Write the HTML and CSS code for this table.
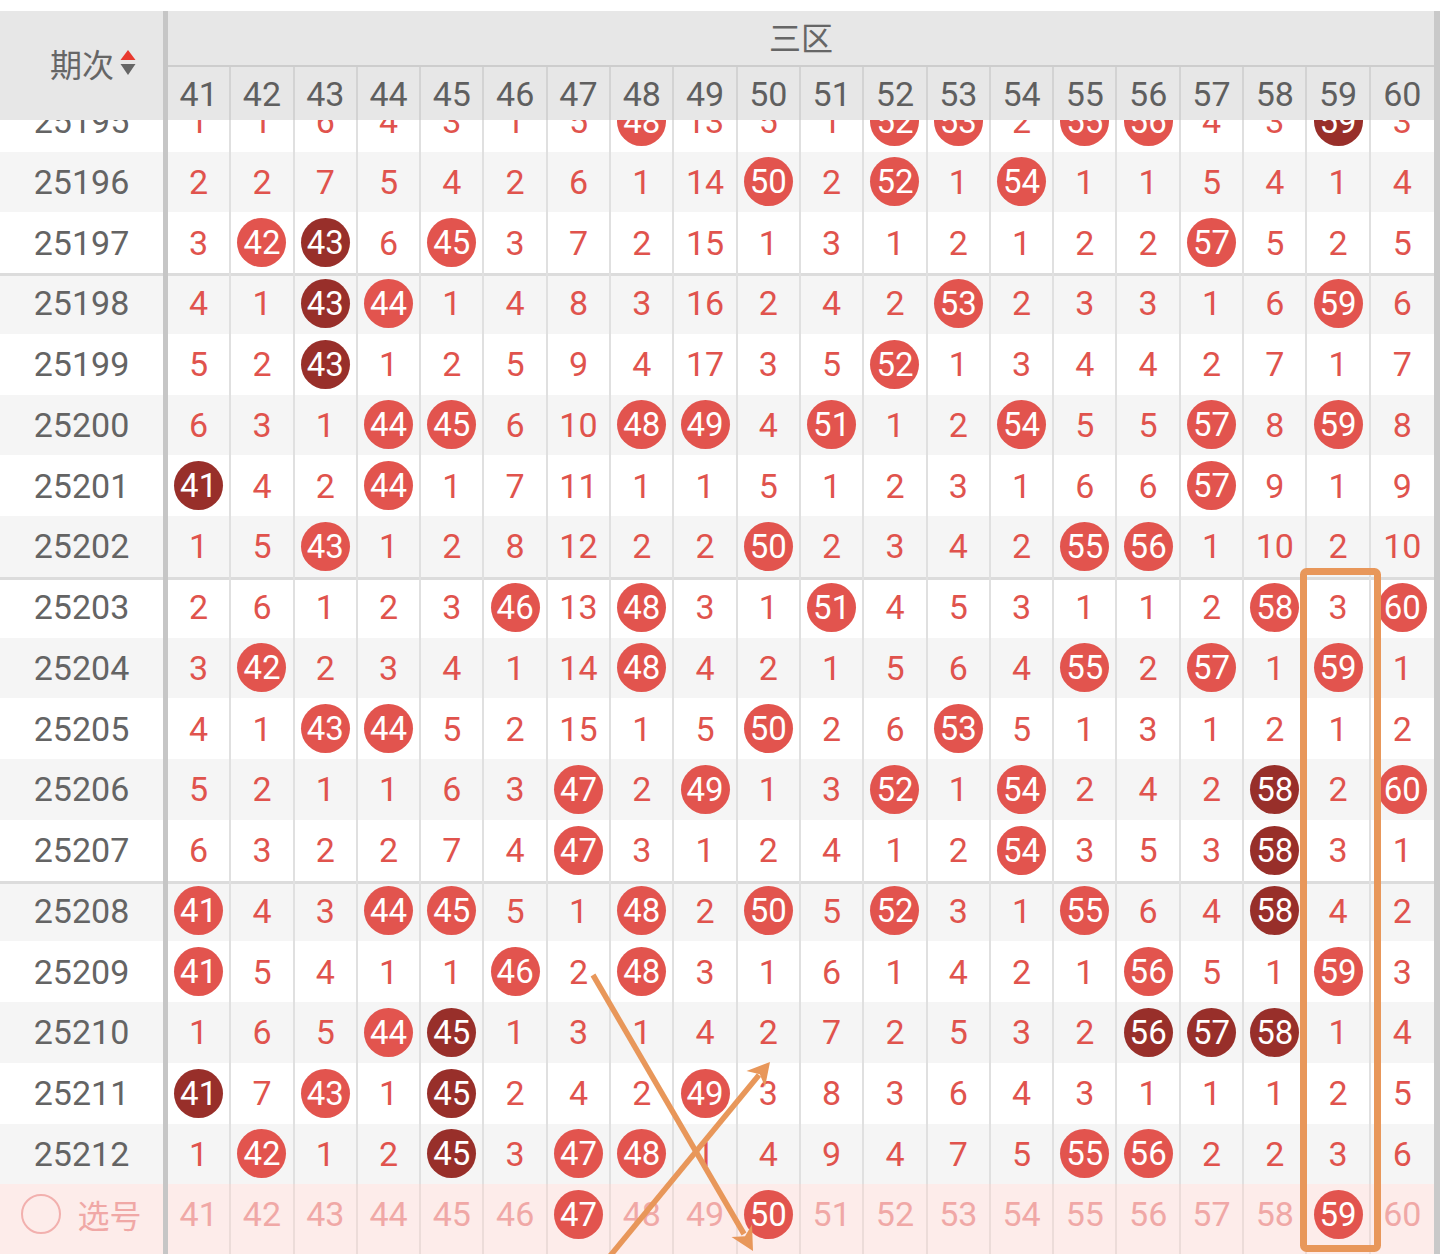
FILE: index.html
```html
<!DOCTYPE html>
<html lang="zh">
<head>
<meta charset="utf-8">
<title>三区走势</title>
<link rel="stylesheet" href="styles.css">
</head>
<body>
<div class="page">
  <div class="sheet">
    <div class="head">
      <div class="head-left">
        <span class="head-title">期次</span>
        <svg class="sort" width="16" height="29" viewBox="0 0 16 29">
          <polygon points="0.5,11 8,1 15.5,11" fill="#e8392f"/>
          <polygon points="0.5,15 15.5,15 8,26" fill="#666666"/>
        </svg>
      </div>
      <div class="head-right">
        <div class="zone">三区</div>
        <div class="nums">
          <span>41</span><span>42</span><span>43</span><span>44</span><span>45</span><span>46</span><span>47</span><span>48</span><span>49</span><span>50</span><span>51</span><span>52</span><span>53</span><span>54</span><span>55</span><span>56</span><span>57</span><span>58</span><span>59</span><span>60</span>
        </div>
      </div>
    </div>
    <div class="body">
      <div class="row cut"><span class="no">25195</span><span>1</span><span>1</span><span>6</span><span>4</span><span>3</span><span>1</span><span>5</span><span><b>48</b></span><span>13</span><span>5</span><span>1</span><span><b>52</b></span><span><b>53</b></span><span>2</span><span><b>55</b></span><span><b>56</b></span><span>4</span><span>3</span><span><b class="dk">59</b></span><span>3</span></div>
      <div class="row alt"><span class="no">25196</span><span>2</span><span>2</span><span>7</span><span>5</span><span>4</span><span>2</span><span>6</span><span>1</span><span>14</span><span><b>50</b></span><span>2</span><span><b>52</b></span><span>1</span><span><b>54</b></span><span>1</span><span>1</span><span>5</span><span>4</span><span>1</span><span>4</span></div>
      <div class="row"><span class="no">25197</span><span>3</span><span><b>42</b></span><span><b class="dk">43</b></span><span>6</span><span><b>45</b></span><span>3</span><span>7</span><span>2</span><span>15</span><span>1</span><span>3</span><span>1</span><span>2</span><span>1</span><span>2</span><span>2</span><span><b>57</b></span><span>5</span><span>2</span><span>5</span></div>
      <div class="row alt grp"><span class="no">25198</span><span>4</span><span>1</span><span><b class="dk">43</b></span><span><b>44</b></span><span>1</span><span>4</span><span>8</span><span>3</span><span>16</span><span>2</span><span>4</span><span>2</span><span><b>53</b></span><span>2</span><span>3</span><span>3</span><span>1</span><span>6</span><span><b>59</b></span><span>6</span></div>
      <div class="row"><span class="no">25199</span><span>5</span><span>2</span><span><b class="dk">43</b></span><span>1</span><span>2</span><span>5</span><span>9</span><span>4</span><span>17</span><span>3</span><span>5</span><span><b>52</b></span><span>1</span><span>3</span><span>4</span><span>4</span><span>2</span><span>7</span><span>1</span><span>7</span></div>
      <div class="row alt"><span class="no">25200</span><span>6</span><span>3</span><span>1</span><span><b>44</b></span><span><b>45</b></span><span>6</span><span>10</span><span><b>48</b></span><span><b>49</b></span><span>4</span><span><b>51</b></span><span>1</span><span>2</span><span><b>54</b></span><span>5</span><span>5</span><span><b>57</b></span><span>8</span><span><b>59</b></span><span>8</span></div>
      <div class="row"><span class="no">25201</span><span><b class="dk">41</b></span><span>4</span><span>2</span><span><b>44</b></span><span>1</span><span>7</span><span>11</span><span>1</span><span>1</span><span>5</span><span>1</span><span>2</span><span>3</span><span>1</span><span>6</span><span>6</span><span><b>57</b></span><span>9</span><span>1</span><span>9</span></div>
      <div class="row alt"><span class="no">25202</span><span>1</span><span>5</span><span><b>43</b></span><span>1</span><span>2</span><span>8</span><span>12</span><span>2</span><span>2</span><span><b>50</b></span><span>2</span><span>3</span><span>4</span><span>2</span><span><b>55</b></span><span><b>56</b></span><span>1</span><span>10</span><span>2</span><span>10</span></div>
      <div class="row grp"><span class="no">25203</span><span>2</span><span>6</span><span>1</span><span>2</span><span>3</span><span><b>46</b></span><span>13</span><span><b>48</b></span><span>3</span><span>1</span><span><b>51</b></span><span>4</span><span>5</span><span>3</span><span>1</span><span>1</span><span>2</span><span><b>58</b></span><span>3</span><span><b>60</b></span></div>
      <div class="row alt"><span class="no">25204</span><span>3</span><span><b>42</b></span><span>2</span><span>3</span><span>4</span><span>1</span><span>14</span><span><b>48</b></span><span>4</span><span>2</span><span>1</span><span>5</span><span>6</span><span>4</span><span><b>55</b></span><span>2</span><span><b>57</b></span><span>1</span><span><b>59</b></span><span>1</span></div>
      <div class="row"><span class="no">25205</span><span>4</span><span>1</span><span><b>43</b></span><span><b>44</b></span><span>5</span><span>2</span><span>15</span><span>1</span><span>5</span><span><b>50</b></span><span>2</span><span>6</span><span><b>53</b></span><span>5</span><span>1</span><span>3</span><span>1</span><span>2</span><span>1</span><span>2</span></div>
      <div class="row alt"><span class="no">25206</span><span>5</span><span>2</span><span>1</span><span>1</span><span>6</span><span>3</span><span><b>47</b></span><span>2</span><span><b>49</b></span><span>1</span><span>3</span><span><b>52</b></span><span>1</span><span><b>54</b></span><span>2</span><span>4</span><span>2</span><span><b class="dk">58</b></span><span>2</span><span><b>60</b></span></div>
      <div class="row"><span class="no">25207</span><span>6</span><span>3</span><span>2</span><span>2</span><span>7</span><span>4</span><span><b>47</b></span><span>3</span><span>1</span><span>2</span><span>4</span><span>1</span><span>2</span><span><b>54</b></span><span>3</span><span>5</span><span>3</span><span><b class="dk">58</b></span><span>3</span><span>1</span></div>
      <div class="row alt grp"><span class="no">25208</span><span><b>41</b></span><span>4</span><span>3</span><span><b>44</b></span><span><b>45</b></span><span>5</span><span>1</span><span><b>48</b></span><span>2</span><span><b>50</b></span><span>5</span><span><b>52</b></span><span>3</span><span>1</span><span><b>55</b></span><span>6</span><span>4</span><span><b class="dk">58</b></span><span>4</span><span>2</span></div>
      <div class="row"><span class="no">25209</span><span><b>41</b></span><span>5</span><span>4</span><span>1</span><span>1</span><span><b>46</b></span><span>2</span><span><b>48</b></span><span>3</span><span>1</span><span>6</span><span>1</span><span>4</span><span>2</span><span>1</span><span><b>56</b></span><span>5</span><span>1</span><span><b>59</b></span><span>3</span></div>
      <div class="row alt"><span class="no">25210</span><span>1</span><span>6</span><span>5</span><span><b>44</b></span><span><b class="dk">45</b></span><span>1</span><span>3</span><span>1</span><span>4</span><span>2</span><span>7</span><span>2</span><span>5</span><span>3</span><span>2</span><span><b class="dk">56</b></span><span><b class="dk">57</b></span><span><b class="dk">58</b></span><span>1</span><span>4</span></div>
      <div class="row"><span class="no">25211</span><span><b class="dk">41</b></span><span>7</span><span><b>43</b></span><span>1</span><span><b class="dk">45</b></span><span>2</span><span>4</span><span>2</span><span><b>49</b></span><span>3</span><span>8</span><span>3</span><span>6</span><span>4</span><span>3</span><span>1</span><span>1</span><span>1</span><span>2</span><span>5</span></div>
      <div class="row alt"><span class="no">25212</span><span>1</span><span><b>42</b></span><span>1</span><span>2</span><span><b class="dk">45</b></span><span>3</span><span><b>47</b></span><span><b>48</b></span><span>1</span><span>4</span><span>9</span><span>4</span><span>7</span><span>5</span><span><b>55</b></span><span><b>56</b></span><span>2</span><span>2</span><span>3</span><span>6</span></div>
      <div class="row pick"><span class="no"><i class="radio"></i><em>选号</em></span><span>41</span><span>42</span><span>43</span><span>44</span><span>45</span><span>46</span><span><b>47</b></span><span>48</span><span>49</span><span><b>50</b></span><span>51</span><span>52</span><span>53</span><span>54</span><span>55</span><span>56</span><span>57</span><span>58</span><span><b>59</b></span><span>60</span></div>
    </div>
  </div>
  <svg class="marks" width="1440" height="1254" viewBox="0 0 1440 1254">
    <rect x="1303.5" y="571.5" width="74" height="677" rx="3" fill="none" stroke="#e8975a" stroke-width="7"/>
    <line x1="593" y1="975" x2="744" y2="1234" stroke="#e8975a" stroke-width="5.5"/>
    <polygon points="753,1251 731.5,1237 745,1236.2 752,1224.5" fill="#e8975a"/>
    <line x1="610" y1="1256" x2="759" y2="1075" stroke="#e8975a" stroke-width="5.5"/>
    <polygon points="770,1062 765,1087 759.8,1074.3 746.5,1071" fill="#e8975a"/>
  </svg>
</div>
</body>
</html>
```
FILE: styles.css
```css
* {
  box-sizing: border-box;
  margin: 0;
  padding: 0;
}

html,
body {
  width: 1440px;
  height: 1254px;
  overflow: hidden;
  background: #ffffff;
}

body {
  font-family: Roboto, "Noto Sans CJK SC", sans-serif;
}

.page {
  position: relative;
  width: 1440px;
  height: 1254px;
  padding-top: 11px;
}

.sheet {
  height: 1243px;
  border-right: 6px solid #c9c9c9;
  overflow: hidden;
  display: flex;
  flex-direction: column;
}

/* ---------- header ---------- */
.head {
  flex: none;
  height: 109px;
  display: grid;
  grid-template-columns: 168px 1fr;
  background: #e7e7e7;
}

.head-left {
  border-right: 5px solid #c6c6c6;
  display: flex;
  align-items: center;
  padding-left: 50px;
  padding-bottom: 6px;
  gap: 6px;
  color: #666666;
}

.head-title {
  font-family: "Noto Sans CJK SC", sans-serif;
  font-size: 32px;
  line-height: 1;
}

.sort {
  display: block;
  margin-top: 2px;
}

.head-right {
  display: flex;
  flex-direction: column;
}

.zone {
  height: 56px;
  border-bottom: 2px solid #cdcdcd;
  padding-bottom: 4px;
  display: flex;
  align-items: center;
  justify-content: center;
  font-family: "Noto Sans CJK SC", sans-serif;
  font-size: 32px;
  line-height: 1;
  color: #666666;
}

.nums {
  flex: 1;
  display: grid;
  grid-template-columns: repeat(20, 1fr);
}

.nums span {
  display: flex;
  align-items: center;
  justify-content: center;
  border-right: 2px solid #d3d3d3;
  font-size: 34px;
  color: #5f5f5f;
}

.nums span:last-child {
  border-right: 0;
}

/* ---------- body ---------- */
.body {
  flex: 1;
  display: flex;
  flex-direction: column;
}

.row {
  flex: none;
  height: 60.75px;
  display: grid;
  grid-template-columns: 168px repeat(20, 1fr);
  grid-template-rows: 100%;
  background: #ffffff;
}

.row.alt {
  background: #f5f5f5;
}

.row.grp {
  box-shadow: inset 0 3px 0 #dcdcdc;
}

.row > span {
  display: flex;
  align-items: center;
  justify-content: center;
  border-right: 2px solid #e0e0e0;
  font-size: 34px;
  color: #e0534d;
}

.row > span:last-child {
  border-right: 0;
}

.row > .no {
  border-right: 5px solid #c6c6c6;
  color: #646464;
}

/* first row: scrolled partly under the header */
.row.cut {
  height: 31.6px;
  overflow: hidden;
  grid-template-rows: 31.6px;
}

.row.cut > span {
  height: 60.75px;
  align-self: unsafe end;
}

.row b {
  width: 49px;
  height: 49px;
  border-radius: 50%;
  background: #e2544e;
  color: #ffffff;
  font-weight: 400;
  font-size: 33px;
  display: flex;
  align-items: center;
  justify-content: center;
}

.row b.dk {
  background: #982f2a;
}

/* ---------- pick row ---------- */
.row.pick {
  flex: 1;
  height: auto;
  background: #fdecea;
}

.row.pick > span {
  color: #f0a8a6;
  padding-bottom: 10px;
  border-right-color: #ecdcd9;
}

.row.pick > .no {
  border-right-color: #c6c6c6;
  gap: 16px;
}

.radio {
  width: 40px;
  height: 40px;
  border: 2px solid #f2b0ae;
  border-radius: 50%;
}

.row.pick em {
  font-style: normal;
  font-family: "Noto Sans CJK SC", sans-serif;
  font-size: 32px;
  line-height: 1;
  color: #f0a8a6;
}

/* ---------- overlay marks ---------- */
.marks {
  position: absolute;
  left: 0;
  top: 0;
  pointer-events: none;
}
```
